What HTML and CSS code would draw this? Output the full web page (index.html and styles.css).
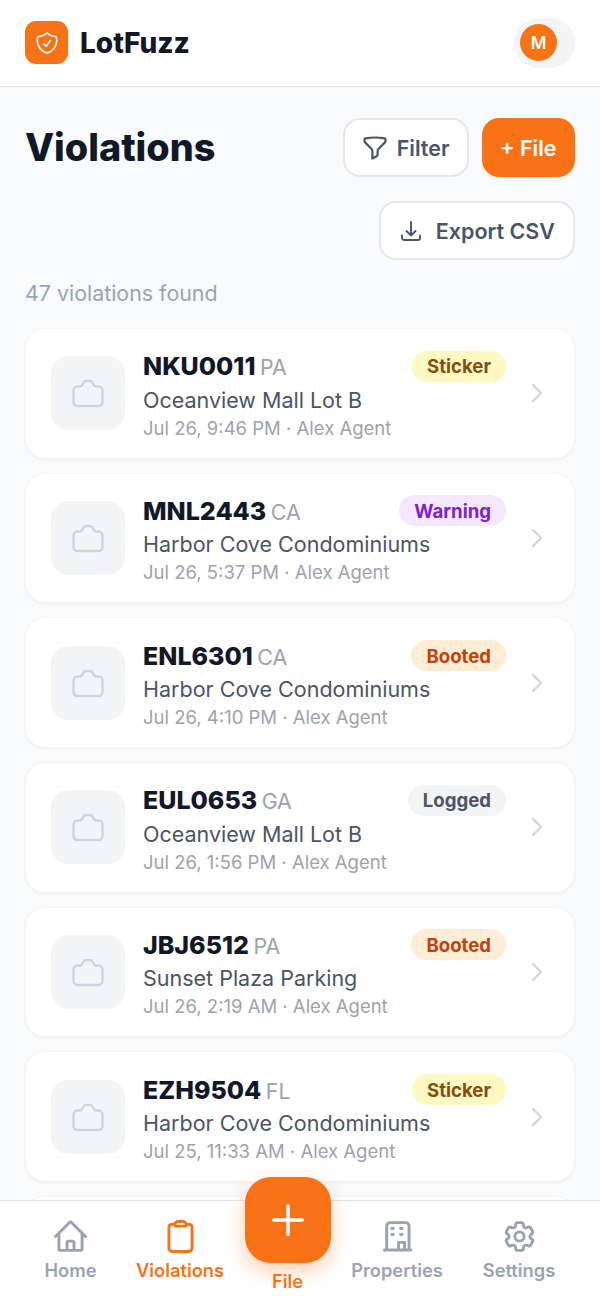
FILE: index.html
```html
<!DOCTYPE html>
<html>
  <head>
    <meta charset="utf-8">
    <title>LotFuzz</title>
    <link rel="stylesheet" href="styles.css">
  </head>
  <body>
    <header class="topbar">
      <div class="brand">
        <div class="logo">
          <svg viewBox="0 0 24 24" width="26" height="26" class="icon" stroke-width="2.400"><path d="M9 12.750 11.250 15 15 9.750m-3-7.036A11.959 11.959 0 0 1 3.598 6 11.990 11.990 0 0 0 3 9.749c0 5.592 3.824 10.290 9 11.623 5.176-1.332 9-6.030 9-11.622 0-1.310-.21-2.571-.598-3.751h-.152c-3.196 0-6.100-1.248-8.250-3.286Z"/></svg>
        </div>
        <span class="brand_name">LotFuzz</span>
      </div>
      <div class="account"><span class="avatar">M</span></div>
    </header>

    <main class="content">
      <div class="title_row">
        <h1>Violations</h1>
        <div class="actions">
          <button class="btn btn_filter">
            <svg viewBox="0 0 24 24" width="28" height="28" class="icon btn_icon"><path d="M12 3c2.755 0 5.455.232 8.083.678.533.09.917.556.917 1.096v1.044a2.250 2.250 0 0 1-.659 1.591l-5.432 5.432a2.250 2.250 0 0 0-.659 1.591v2.927a2.250 2.250 0 0 1-1.244 2.013L9.750 21v-6.568a2.250 2.250 0 0 0-.659-1.591L3.659 7.409A2.250 2.250 0 0 1 3 5.818V4.774c0-.54.384-1.006.917-1.096A48.320 48.320 0 0 1 12 3Z"/></svg>
            Filter
          </button>
          <button class="btn btn_primary">+ File</button>
          <button class="btn btn_export">
            <svg viewBox="0 0 24 24" width="24" height="24" class="icon btn_icon"><path d="M3 16.500v2.250A2.250 2.250 0 0 0 5.250 21h13.500A2.250 2.250 0 0 0 21 18.750V16.500M16.500 12 12 16.500m0 0L7.500 12m4.500 4.500V3"/></svg>
            Export CSV
          </button>
        </div>
      </div>

      <p class="count">47 violations found</p>

      <div class="list">
        <div class="card">
          <div class="thumb">
            <svg viewBox="0 0 32 32" width="32" height="32" class="icon camera"><path d="M5.500 9.500h2.200c.9 0 1.600-.4 2.100-1.100l1.900-3.100c.5-.8 1.300-1.300 2.200-1.300h4.200c.9 0 1.700.5 2.200 1.300l1.900 3.100c.5.7 1.200 1.100 2.100 1.100h2.200a4 4 0 0 1 4 4V25a4 4 0 0 1-4 4H5.500a4 4 0 0 1-4-4V13.500a4 4 0 0 1 4-4Z"/></svg>
          </div>
          <div class="info">
            <div class="info_top">
              <div class="plate"><b>NKU0011</b> <span>PA</span></div>
              <span class="badge badge_sticker">Sticker</span>
            </div>
            <div class="place">Oceanview Mall Lot B</div>
            <div class="meta">Jul 26, 9:46 PM · Alex Agent</div>
          </div>
          <svg viewBox="0 0 24 24" width="26" height="26" class="icon chevron"><path d="m8.250 4.500 7.500 7.500-7.500 7.500"/></svg>
        </div>

        <div class="card">
          <div class="thumb">
            <svg viewBox="0 0 32 32" width="32" height="32" class="icon camera"><path d="M5.500 9.500h2.200c.9 0 1.600-.4 2.100-1.100l1.900-3.100c.5-.8 1.300-1.300 2.200-1.300h4.200c.9 0 1.700.5 2.200 1.300l1.900 3.100c.5.7 1.200 1.100 2.100 1.100h2.200a4 4 0 0 1 4 4V25a4 4 0 0 1-4 4H5.500a4 4 0 0 1-4-4V13.500a4 4 0 0 1 4-4Z"/></svg>
          </div>
          <div class="info">
            <div class="info_top">
              <div class="plate"><b>MNL2443</b> <span>CA</span></div>
              <span class="badge badge_warning">Warning</span>
            </div>
            <div class="place">Harbor Cove Condominiums</div>
            <div class="meta">Jul 26, 5:37 PM · Alex Agent</div>
          </div>
          <svg viewBox="0 0 24 24" width="26" height="26" class="icon chevron"><path d="m8.250 4.500 7.500 7.500-7.500 7.500"/></svg>
        </div>

        <div class="card">
          <div class="thumb">
            <svg viewBox="0 0 32 32" width="32" height="32" class="icon camera"><path d="M5.500 9.500h2.200c.9 0 1.600-.4 2.100-1.100l1.900-3.100c.5-.8 1.300-1.300 2.200-1.300h4.200c.9 0 1.700.5 2.200 1.300l1.900 3.100c.5.7 1.200 1.100 2.100 1.100h2.200a4 4 0 0 1 4 4V25a4 4 0 0 1-4 4H5.500a4 4 0 0 1-4-4V13.500a4 4 0 0 1 4-4Z"/></svg>
          </div>
          <div class="info">
            <div class="info_top">
              <div class="plate"><b>ENL6301</b> <span>CA</span></div>
              <span class="badge badge_booted">Booted</span>
            </div>
            <div class="place">Harbor Cove Condominiums</div>
            <div class="meta">Jul 26, 4:10 PM · Alex Agent</div>
          </div>
          <svg viewBox="0 0 24 24" width="26" height="26" class="icon chevron"><path d="m8.250 4.500 7.500 7.500-7.500 7.500"/></svg>
        </div>

        <div class="card">
          <div class="thumb">
            <svg viewBox="0 0 32 32" width="32" height="32" class="icon camera"><path d="M5.500 9.500h2.200c.9 0 1.600-.4 2.100-1.100l1.900-3.100c.5-.8 1.300-1.300 2.200-1.300h4.200c.9 0 1.700.5 2.200 1.300l1.900 3.100c.5.7 1.200 1.100 2.100 1.100h2.200a4 4 0 0 1 4 4V25a4 4 0 0 1-4 4H5.500a4 4 0 0 1-4-4V13.500a4 4 0 0 1 4-4Z"/></svg>
          </div>
          <div class="info">
            <div class="info_top">
              <div class="plate"><b>EUL0653</b> <span>GA</span></div>
              <span class="badge badge_logged">Logged</span>
            </div>
            <div class="place">Oceanview Mall Lot B</div>
            <div class="meta">Jul 26, 1:56 PM · Alex Agent</div>
          </div>
          <svg viewBox="0 0 24 24" width="26" height="26" class="icon chevron"><path d="m8.250 4.500 7.500 7.500-7.500 7.500"/></svg>
        </div>

        <div class="card">
          <div class="thumb">
            <svg viewBox="0 0 32 32" width="32" height="32" class="icon camera"><path d="M5.500 9.500h2.200c.9 0 1.600-.4 2.100-1.100l1.900-3.100c.5-.8 1.300-1.300 2.200-1.300h4.200c.9 0 1.700.5 2.200 1.300l1.900 3.100c.5.7 1.200 1.100 2.100 1.100h2.200a4 4 0 0 1 4 4V25a4 4 0 0 1-4 4H5.500a4 4 0 0 1-4-4V13.500a4 4 0 0 1 4-4Z"/></svg>
          </div>
          <div class="info">
            <div class="info_top">
              <div class="plate"><b>JBJ6512</b> <span>PA</span></div>
              <span class="badge badge_booted">Booted</span>
            </div>
            <div class="place">Sunset Plaza Parking</div>
            <div class="meta">Jul 26, 2:19 AM · Alex Agent</div>
          </div>
          <svg viewBox="0 0 24 24" width="26" height="26" class="icon chevron"><path d="m8.250 4.500 7.500 7.500-7.500 7.500"/></svg>
        </div>

        <div class="card">
          <div class="thumb">
            <svg viewBox="0 0 32 32" width="32" height="32" class="icon camera"><path d="M5.500 9.500h2.200c.9 0 1.600-.4 2.100-1.100l1.900-3.100c.5-.8 1.300-1.300 2.200-1.300h4.200c.9 0 1.700.5 2.200 1.300l1.900 3.100c.5.7 1.200 1.100 2.100 1.100h2.200a4 4 0 0 1 4 4V25a4 4 0 0 1-4 4H5.500a4 4 0 0 1-4-4V13.500a4 4 0 0 1 4-4Z"/></svg>
          </div>
          <div class="info">
            <div class="info_top">
              <div class="plate"><b>EZH9504</b> <span>FL</span></div>
              <span class="badge badge_sticker">Sticker</span>
            </div>
            <div class="place">Harbor Cove Condominiums</div>
            <div class="meta">Jul 25, 11:33 AM · Alex Agent</div>
          </div>
          <svg viewBox="0 0 24 24" width="26" height="26" class="icon chevron"><path d="m8.250 4.500 7.500 7.500-7.500 7.500"/></svg>
        </div>

        <div class="card"></div>
      </div>
    </main>

    <nav class="tabbar">
      <a class="tab">
        <svg viewBox="0 0 24 24" width="37" height="37" class="icon"><path d="m2.250 12 8.954-8.955c.44-.439 1.152-.439 1.591 0L21.750 12M4.500 9.750v10.125c0 .621.504 1.125 1.125 1.125H9.750v-4.875c0-.621.504-1.125 1.125-1.125h2.250c.621 0 1.125.504 1.125 1.125V21h4.125c.621 0 1.125-.504 1.125-1.125V9.750M8.250 21h8.250"/></svg>
        <span>Home</span>
      </a>
      <a class="tab tab_active">
        <svg viewBox="0 0 24 24" width="37" height="37" class="icon"><path d="M15.666 3.888A2.250 2.250 0 0 0 13.500 2.250h-3c-1.030 0-1.900.693-2.166 1.638m7.332 0c.055.194.084.4.084.612v0a.75.75 0 0 1-.75.75H9a.75.75 0 0 1-.75-.75v0c0-.212.03-.418.084-.612m7.332 0c.646.049 1.288.11 1.927.184 1.100.128 1.907 1.077 1.907 2.185V19.500a2.250 2.250 0 0 1-2.250 2.250H6.750A2.250 2.250 0 0 1 4.500 19.500V6.257c0-1.108.806-2.057 1.907-2.185a48.208 48.208 0 0 1 1.927-.184"/></svg>
        <span>Violations</span>
      </a>
      <a class="tab tab_file">
        <span class="fab">
          <svg viewBox="0 0 24 24" width="46" height="46" class="icon plus"><path d="M12 4.500v15m7.500-7.500h-15"/></svg>
        </span>
        <span>File</span>
      </a>
      <a class="tab">
        <svg viewBox="0 0 24 24" width="37" height="37" class="icon"><path d="M3.400 20.800h17.200M5 20.800V5.200A2.200 2.200 0 0 1 7.200 3h10.100a2.200 2.200 0 0 1 2.200 2.200v15.600M8.300 6.800h1M14 6.800h1M8.300 10.700h1M14 10.700h1M12.700 20.800v-5h3.900v5"/></svg>
        <span>Properties</span>
      </a>
      <a class="tab">
        <svg viewBox="0 0 24 24" width="37" height="37" class="icon"><path d="M9.594 3.940c.09-.542.56-.94 1.110-.94h2.593c.55 0 1.020.398 1.110.94l.213 1.281c.063.374.313.686.645.87.074.04.147.083.22.127.325.196.72.257 1.075.124l1.217-.456a1.125 1.125 0 0 1 1.370.49l1.296 2.247a1.125 1.125 0 0 1-.26 1.431l-1.003.827c-.293.241-.438.613-.43.992a7.723 7.723 0 0 1 0 .255c-.008.378.137.75.43.991l1.004.827c.424.35.534.955.26 1.430l-1.298 2.247a1.125 1.125 0 0 1-1.369.491l-1.217-.456c-.355-.133-.75-.072-1.076.124a6.470 6.470 0 0 1-.22.128c-.331.183-.581.495-.644.869l-.213 1.281c-.09.543-.56.94-1.110.94h-2.594c-.55 0-1.019-.398-1.110-.94l-.213-1.281c-.062-.374-.312-.686-.644-.87a6.520 6.520 0 0 1-.22-.127c-.325-.196-.72-.257-1.076-.124l-1.217.456a1.125 1.125 0 0 1-1.369-.49l-1.297-2.247a1.125 1.125 0 0 1 .26-1.431l1.004-.827c.292-.24.437-.613.43-.991a6.932 6.932 0 0 1 0-.255c.007-.38-.138-.751-.43-.992l-1.004-.827a1.125 1.125 0 0 1-.26-1.430l1.297-2.247a1.125 1.125 0 0 1 1.370-.491l1.216.456c.356.133.751.072 1.076-.124.072-.044.146-.086.22-.128.332-.183.582-.495.644-.869l.214-1.280Z"/><path d="M15 12a3 3 0 1 1-6 0 3 3 0 0 1 6 0Z"/></svg>
        <span>Settings</span>
      </a>
    </nav>
  </body>
</html>
```

FILE: styles.css
```css
* {
  box-sizing: border-box;
}

body {
  margin: 0;
  height: 1298px;
  overflow: hidden;
  position: relative;
  background: #f9fafb;
  font-family: Inter, sans-serif;
  color: #111827;
}

.icon {
  fill: none;
  stroke: currentColor;
  stroke-width: 1.5;
  stroke-linecap: round;
  stroke-linejoin: round;
  display: block;
  flex: none;
}

.topbar {
  height: 87px;
  background: #fff;
  border-bottom: 1px solid #e5e7eb;
  padding: 0 25px 1px;
  display: flex;
  align-items: center;
  justify-content: space-between;
}

.brand {
  display: flex;
  align-items: center;
  gap: 12px;
}

.logo {
  width: 43px;
  height: 43px;
  border-radius: 11px;
  background: #f97316;
  color: #fff;
  display: flex;
  align-items: center;
  justify-content: center;
}

.brand_name {
  font-size: 28px;
  font-weight: 800;
}

.account {
  width: 61px;
  height: 50px;
  border-radius: 25px;
  background: #f3f4f6;
  display: flex;
  align-items: center;
  padding-left: 6px;
}

.avatar {
  width: 37px;
  height: 37px;
  border-radius: 50%;
  background: #f97316;
  color: #fff;
  font-size: 17px;
  font-weight: 600;
  display: flex;
  align-items: center;
  justify-content: center;
}

.content {
  padding: 31px 25px 0;
}

.title_row {
  display: flex;
  justify-content: space-between;
  align-items: flex-start;
}

h1 {
  margin: 0;
  font-size: 37.8px;
  font-weight: 800;
  line-height: 58px;
}

.actions {
  display: flex;
  flex-wrap: wrap;
  justify-content: flex-end;
  gap: 24px 13px;
  width: 260px;
}

.btn {
  height: 59px;
  padding: 0 18px;
  border: 2px solid #e5e7eb;
  border-radius: 17px;
  background: #fff;
  color: #4b5563;
  font-family: inherit;
  font-size: 21.5px;
  font-weight: 600;
  display: flex;
  align-items: center;
}

.btn_icon {
  stroke-width: 1.9;
}

.btn_filter {
  padding: 0 17px 0 16px;
  gap: 8px;
}

.btn_primary {
  border: 0;
  padding: 0 18.500px;
  background: #f97316;
  color: #fff;
}

.btn_export {
  gap: 13px;
}

.count {
  margin: 19px 0 21px;
  font-size: 21.4px;
  line-height: 28px;
  color: #9ca3af;
}

.list {
  display: flex;
  flex-direction: column;
  gap: 14px;
}

.card {
  height: 130.67px;
  background: #fff;
  border: 1px solid #f3f4f6;
  border-radius: 20px;
  box-shadow: 0 1px 3px rgba(0, 0, 0, 0.05);
  padding: 0 24px 0 25px;
  display: flex;
  align-items: center;
}

.thumb {
  width: 74px;
  height: 74px;
  border-radius: 18px;
  background: #f3f4f6;
  color: #d1d5db;
  display: flex;
  align-items: center;
  justify-content: center;
  margin-right: 18px;
}

.camera {
  stroke-width: 2.5;
}

.info {
  flex: 1;
  min-width: 0;
  margin-right: 18px;
  padding-top: 4px;
}

.info_top {
  display: flex;
  justify-content: space-between;
  align-items: center;
}

.plate b {
  font-size: 25px;
  font-weight: 800;
}

.plate span {
  font-size: 21.4px;
  color: #9ca3af;
}

.badge {
  height: 31px;
  padding: 0 15px;
  border-radius: 16px;
  font-size: 18.600px;
  font-weight: 700;
  display: flex;
  align-items: center;
}

.badge_sticker {
  background: #fef9c3;
  color: #854d0e;
}

.badge_warning {
  background: #f3e8ff;
  color: #7e22ce;
}

.badge_booted {
  background: #ffedd5;
  color: #c2410c;
}

.badge_logged {
  background: #f3f4f6;
  color: #4b5563;
}

.place {
  font-size: 21.5px;
  line-height: 31px;
  color: #4b5563;
  margin-top: 3px;
}

.meta {
  font-size: 18.5px;
  line-height: 24px;
  color: #9ca3af;
}

.chevron {
  color: #d1d5db;
  stroke-width: 2;
}

.tabbar {
  position: absolute;
  left: 0;
  right: 0;
  bottom: 0;
  height: 98px;
  background: #fff;
  border-top: 1px solid #e5e7eb;
  padding: 0 21px;
  display: grid;
  grid-template-columns: 99px 120px 95px 124px 120px;
}

.tab {
  display: flex;
  flex-direction: column;
  align-items: center;
  gap: 4px;
  padding-top: 17px;
  font-size: 18.3px;
  line-height: 22px;
  font-weight: 600;
  color: #9ca3af;
}

.tab .icon {
  stroke-width: 1.9;
}

.tab_active, .tab_file {
  color: #f97316;
}

.tab_file {
  padding-top: 0;
  gap: 7px;
}

.tab .plus {
  stroke-width: 1.8;
}

.fab {
  width: 86px;
  height: 86px;
  border-radius: 26px;
  background: #f97316;
  color: #fff;
  margin-top: -24px;
  box-shadow: 0 8px 20px rgba(249, 115, 22, 0.35);
  display: flex;
  align-items: center;
  justify-content: center;
}
```
